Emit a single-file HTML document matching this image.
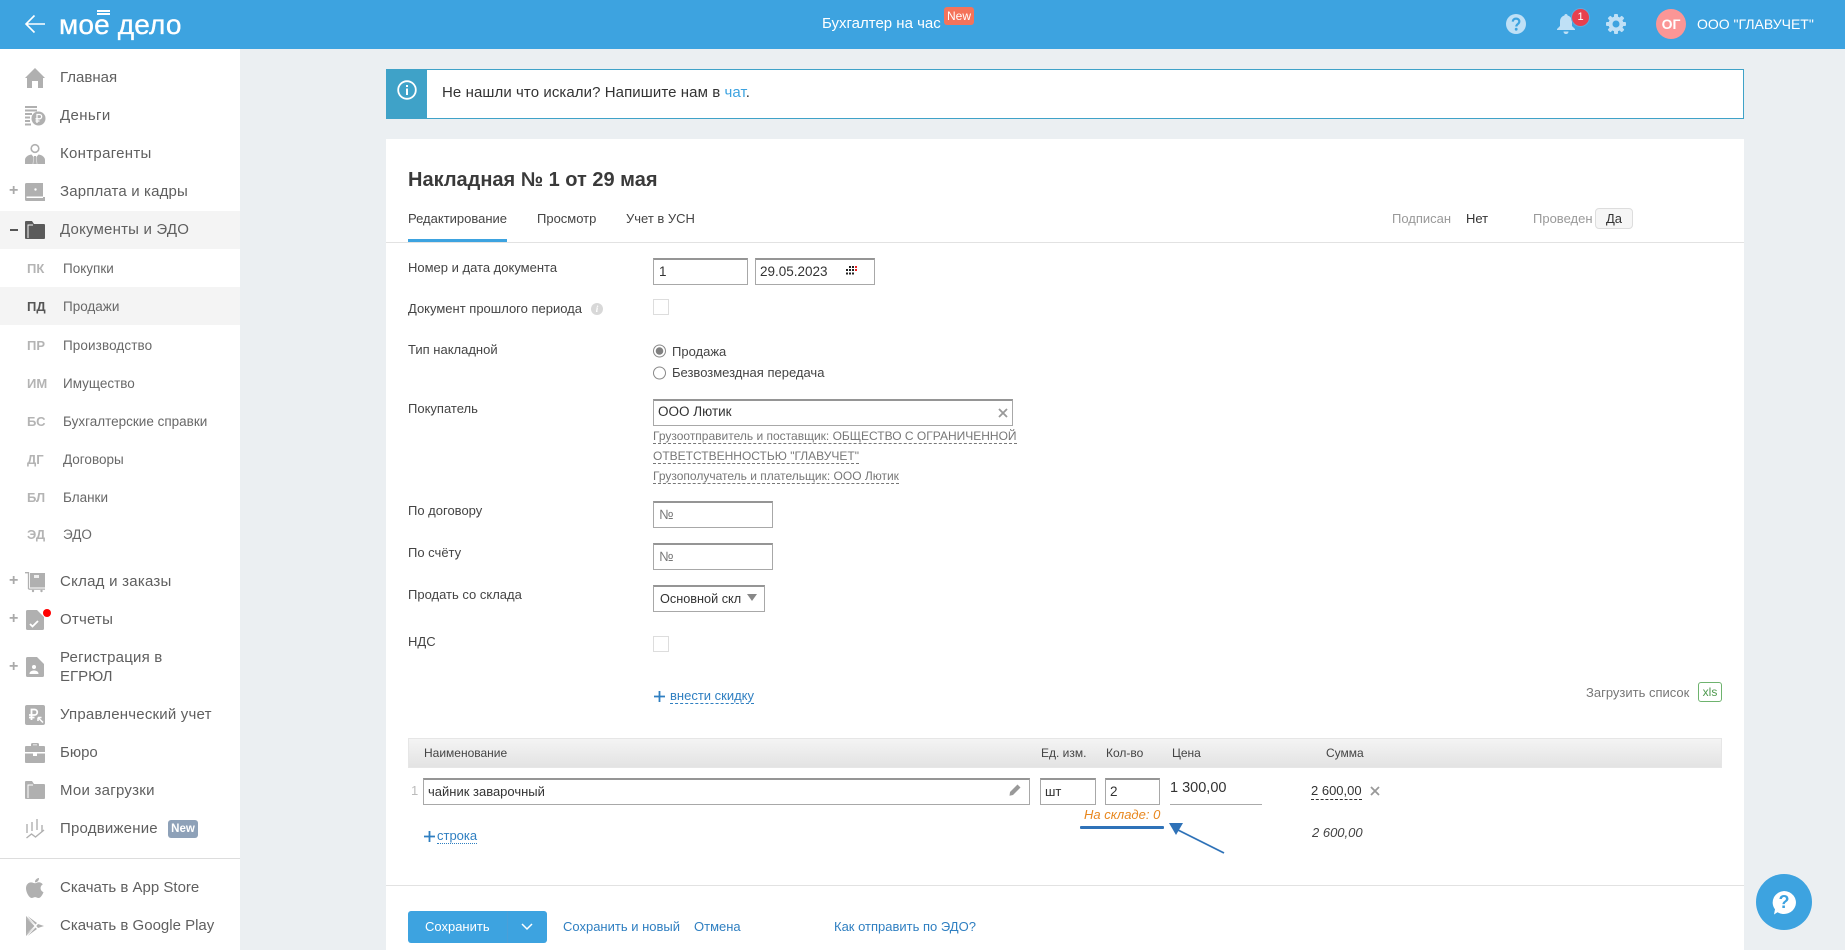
<!DOCTYPE html>
<html lang="ru"><head><meta charset="utf-8"><title>Накладная</title>
<style>
html,body{margin:0;padding:0;width:1845px;height:950px;overflow:hidden;background:#ebeff2;font-family:"Liberation Sans",sans-serif;color:#333}
.a{position:absolute}
.t{position:absolute;white-space:nowrap;line-height:20px}
.m{font-size:15px;color:#5f5f5f;left:60px}
.s{font-size:13.5px;color:#686868;left:63px}
.b{font-size:13px;font-weight:bold;color:#b4b4b4;left:27px}
.p{font-size:16px;font-weight:bold;color:#aaa;left:9px}
.l{font-size:13px;color:#444;left:408px}
.i{position:absolute;box-sizing:border-box;background:#fff;border:1px solid #a8a8a8;border-top:2px solid #959595;height:27px;font-size:13.5px;line-height:24px;padding-left:5px;color:#333;white-space:nowrap}
.c{position:absolute;box-sizing:border-box;width:16px;height:16px;background:#fff;border:1px solid #ddd}
.d{position:absolute;white-space:nowrap;font-size:12px;line-height:20px;color:#777;left:653px}
.u{position:absolute;height:0;border-bottom:1px dashed #777}
.h{position:absolute;white-space:nowrap;font-size:12px;line-height:20px;color:#444;top:743px}
.lk{position:absolute;white-space:nowrap;font-size:13px;line-height:20px;color:#2f7fc1;top:917px}
svg{position:absolute;display:block;overflow:visible}
</style></head><body>

<!-- header -->
<div class="a" style="left:0;top:0;width:1845px;height:49px;background:#3da3e0"></div>
<svg style="left:24px;top:13px" width="22" height="22" viewBox="0 0 22 22" fill="none" stroke="#fff" stroke-width="1.6"><path d="M21 11H2M10.5 2.5L2 11l8.500 8.500"/></svg>
<div class="t" style="left:59px;top:10px;font-size:28px;line-height:30px;color:#fff;letter-spacing:.15px;-webkit-text-stroke:.35px #fff">мое дело</div>
<div class="a" style="left:97px;top:10px;width:13px;height:1.5px;background:#fff"></div>
<div class="a" style="left:97px;top:13px;width:13px;height:1.5px;background:#fff"></div>
<div class="t" style="left:822px;top:14px;font-size:15px;color:#fff">Бухгалтер на час</div>
<div class="t" style="left:944px;top:7px;width:30px;height:18px;line-height:18px;background:#f4735a;border-radius:3px;color:#fff;font-size:12px;text-align:center">New</div>

<svg style="left:1506px;top:14px" width="20" height="20" viewBox="0 0 20 20"><circle cx="10" cy="10" r="10" fill="#bfe0f6"/><path d="M6.800 7.600C6.800 5.800 8.200 4.600 10 4.600c1.900 0 3.300 1.100 3.300 2.900 0 2.600-3 2.500-3 5" fill="none" stroke="#3da3e0" stroke-width="2.200"/><circle cx="10.200" cy="15.200" r="1.400" fill="#3da3e0"/></svg>
<svg style="left:1557px;top:14px" width="18" height="20" viewBox="0 0 18 20" fill="#bfe0f6"><path d="M9 0c1 0 1.600.7 1.600 1.500C13.500 2.300 15 4.700 15 7.500v4.500l3 3v1H0v-1l3-3V7.500c0-2.800 1.500-5.200 4.400-6C7.400.7 8 0 9 0z"/><path d="M6.500 17.500h5c0 1.500-1.100 2.500-2.500 2.500s-2.500-1-2.500-2.500z"/></svg>
<div class="a" style="left:1571px;top:8px;width:17px;height:17px;border-radius:50%;background:#e8404e;border:1.500px solid #5cace0;color:#fff;font-size:11px;line-height:17px;text-align:center">1</div>
<svg style="left:1606px;top:14px" width="20" height="20" viewBox="0 0 20 20"><g fill="#bfe0f6"><circle cx="10" cy="10" r="7.500"/><rect x="8" y="0" width="4" height="20" rx="1"/><rect x="8" y="0" width="4" height="20" rx="1" transform="rotate(45 10 10)"/><rect x="8" y="0" width="4" height="20" rx="1" transform="rotate(90 10 10)"/><rect x="8" y="0" width="4" height="20" rx="1" transform="rotate(135 10 10)"/></g><circle cx="10" cy="10" r="3.500" fill="#3da3e0"/></svg>
<div class="a" style="left:1656px;top:9px;width:30px;height:30px;border-radius:50%;background:#fb9696;color:#fff;font-size:14px;font-weight:bold;line-height:30px;text-align:center">ОГ</div>
<div class="t" style="left:1697px;top:14px;font-size:14px;color:#fff">ООО "ГЛАВУЧЕТ"</div>

<!-- sidebar -->
<div class="a" style="left:0;top:49px;width:240px;height:901px;background:#fff"></div>
<div class="a" style="left:0;top:211px;width:240px;height:38px;background:#f4f4f4"></div>
<div class="a" style="left:0;top:287px;width:240px;height:38px;background:#f4f4f4"></div>
<div class="a" style="left:0;top:858px;width:240px;height:1px;background:#ddd"></div>

<div class="t m" style="top:68px">Главная</div>
<div class="t m" style="top:106px;letter-spacing:.35px">Деньги</div>
<div class="t m" style="top:144px;letter-spacing:.3px">Контрагенты</div>
<div class="t m" style="top:182px;letter-spacing:.15px">Зарплата и кадры</div>
<div class="t m" style="top:220px;letter-spacing:.2px">Документы и ЭДО</div>
<div class="t s" style="top:259px">Покупки</div><div class="t b" style="top:259px">ПК</div>
<div class="t s" style="top:297px">Продажи</div><div class="t b" style="top:297px;color:#555">ПД</div>
<div class="t s" style="top:336px;letter-spacing:.1px">Производство</div><div class="t b" style="top:336px">ПР</div>
<div class="t s" style="top:374px">Имущество</div><div class="t b" style="top:374px">ИМ</div>
<div class="t s" style="top:412px">Бухгалтерские справки</div><div class="t b" style="top:412px">БС</div>
<div class="t s" style="top:450px">Договоры</div><div class="t b" style="top:450px">ДГ</div>
<div class="t s" style="top:488px">Бланки</div><div class="t b" style="top:488px">БЛ</div>
<div class="t s" style="top:525px">ЭДО</div><div class="t b" style="top:525px">ЭД</div>
<div class="t m" style="top:572px;letter-spacing:.25px">Склад и заказы</div>
<div class="t m" style="top:610px;letter-spacing:.2px">Отчеты</div>
<div class="t m" style="top:648px;letter-spacing:.2px">Регистрация в</div>
<div class="t m" style="top:667px">ЕГРЮЛ</div>
<div class="t m" style="top:705px;letter-spacing:.2px">Управленческий учет</div>
<div class="t m" style="top:743px">Бюро</div>
<div class="t m" style="top:781px;letter-spacing:.25px">Мои загрузки</div>
<div class="t m" style="top:819px;letter-spacing:.2px">Продвижение</div>
<div class="t" style="left:168px;top:820px;width:30px;height:18px;line-height:18px;background:#8ea1b8;border-radius:3px;color:#fff;font-size:11.500px;font-weight:bold;text-align:center">New</div>
<div class="t m" style="top:878px">Скачать в App Store</div>
<div class="t m" style="top:916px">Скачать в Google Play</div>

<div class="t p" style="top:181px">+</div>
<div class="a" style="left:10px;top:229px;width:8px;height:2px;background:#555"></div>
<div class="t p" style="top:571px">+</div>
<div class="t p" style="top:609px">+</div>
<div class="t p" style="top:657px">+</div>

<!-- sidebar icons -->
<svg style="left:25px;top:68px" width="20" height="20" viewBox="0 0 20 20" fill="#b0b0b0"><path d="M10 0l10 10h-2v10h-5v-7H7v7H2V10H0z"/></svg>
<svg style="left:25px;top:106px" width="20" height="20" viewBox="0 0 20 20" fill="#b0b0b0"><rect x="0" y="0" width="12" height="2"/><rect x="0" y="3.500" width="12" height="2"/><rect x="0" y="7" width="7" height="2"/><rect x="0" y="10.500" width="5" height="2"/><rect x="0" y="14" width="5" height="2"/><rect x="0" y="17.500" width="6" height="2"/><circle cx="13.500" cy="12.500" r="7"/><path d="M12 17V8.500h2.500a2.100 2.100 0 010 4.300H10.500M10.500 15h4" fill="none" stroke="#fff" stroke-width="1.300"/></svg>
<svg style="left:25px;top:144px" width="20" height="20" viewBox="0 0 20 20"><circle cx="10" cy="4.500" r="3.800" fill="none" stroke="#b0b0b0" stroke-width="1.600"/><path d="M0 20v-4c0-3 3-5 6.500-5.500L8.500 13l-.8 7zM20 20v-4c0-3-3-5-6.500-5.500L11.500 13l.8 7zM9 12h2l.8 8H8.200z" fill="#b0b0b0"/></svg>
<svg style="left:25px;top:183px" width="20" height="18" viewBox="0 0 20 18" fill="#b0b0b0"><path d="M0 1.500A1.500 1.500 0 011.500 0H18v13.500H1.500V15H18v-1h2v4H1.500A1.500 1.500 0 010 16.500z"/><circle cx="10.500" cy="6.500" r="1.200" fill="#fff"/></svg>
<svg style="left:25px;top:221px" width="20" height="18" viewBox="0 0 20 18"><path d="M0 1a1 1 0 011-1h6l2 3h10a1 1 0 011 1v13a1 1 0 01-1 1H1a1 1 0 01-1-1z" fill="#5a5a5a"/><path d="M3 17V4h5" fill="none" stroke="#f4f4f4" stroke-width="1"/></svg>
<svg style="left:25px;top:572px" width="20" height="20" viewBox="0 0 20 20" fill="#b0b0b0"><path d="M0 .7h3.500V17" fill="none" stroke="#b0b0b0" stroke-width="1.300"/><path d="M5 1h15v14.500H5z"/><rect x="9" y="3" width="5" height="3" fill="#fff" opacity=".8"/><rect x="3.500" y="16.500" width="16.500" height="1.300"/><circle cx="8" cy="19" r="1.200"/><circle cx="16.500" cy="19" r="1.200"/></svg>
<svg style="left:26px;top:610px" width="18" height="20" viewBox="0 0 18 20"><path d="M1.500 0H11l7 7v11.500a1.500 1.500 0 01-1.500 1.500h-15A1.500 1.500 0 010 18.500v-17A1.500 1.500 0 011.500 0z" fill="#b0b0b0"/><path d="M4 14l2.500 2.500L12 11" fill="none" stroke="#fff" stroke-width="1.800"/></svg>
<div class="a" style="left:43px;top:609px;width:8px;height:8px;background:#f00;border-radius:50%"></div>
<svg style="left:26px;top:657px" width="18" height="20" viewBox="0 0 18 20"><path d="M1.500 0H11l7 7v11.500a1.500 1.500 0 01-1.500 1.500h-15A1.500 1.500 0 010 18.500v-17A1.500 1.500 0 011.500 0z" fill="#b0b0b0"/><circle cx="8" cy="10" r="2" fill="#fff"/><path d="M3.500 17c0-2.500 2-3.500 4.500-3.500s4.500 1 4.500 3.500z" fill="#fff"/></svg>
<svg style="left:25px;top:705px" width="20" height="20" viewBox="0 0 20 20"><rect width="20" height="20" rx="2" fill="#b0b0b0"/><path d="M6.500 15V4.500h3a2.700 2.700 0 010 5.500H4M4 12.500h5.500" fill="none" stroke="#fff" stroke-width="1.800"/><path d="M13 12.500l5 5M13 12.500h3.500M13 12.500V16" fill="none" stroke="#fff" stroke-width="1.500"/></svg>
<svg style="left:25px;top:743px" width="20" height="20" viewBox="0 0 20 20" fill="#b0b0b0"><path d="M6 3V1.500A1.500 1.500 0 017.500 0h5A1.500 1.500 0 0114 1.500V3h5a1 1 0 011 1v5H0V4a1 1 0 011-1zm2-.7h4V1.500H8z"/><path d="M0 10.500h8V13h4v-2.500h8V19a1 1 0 01-1 1H1a1 1 0 01-1-1z"/></svg>
<svg style="left:25px;top:781px" width="20" height="18" viewBox="0 0 20 18"><path d="M0 1a1 1 0 011-1h6l2 3h10a1 1 0 011 1v13a1 1 0 01-1 1H1a1 1 0 01-1-1z" fill="#b0b0b0"/><path d="M3 17V4h5" fill="none" stroke="#fff" stroke-width="1"/></svg>
<svg style="left:26px;top:819px" width="19" height="20" viewBox="0 0 19 20" fill="none" stroke="#b0b0b0" stroke-width="1.400"><path d="M1 5v9M6 3v9M11 0v11M16 6v7"/><path d="M0.500 19l5-4 4 3 8.500-7"/></svg>
<svg style="left:26px;top:878px" width="18" height="20" viewBox="0 0 18 20" fill="#b0b0b0"><path d="M13 0c.2 2.300-1.800 4.500-4 4.300C8.800 2.100 10.800.1 13 0zM9.100 5.300c1.100 0 2.100-1 3.800-1 1.500 0 3 .8 3.900 2.100-3.300 1.900-2.800 6.500.7 7.800-.9 2.300-2.900 5.800-4.900 5.800-1.400 0-2-.9-3.500-.9s-2.200.9-3.500.9C3.200 20 0 14.500 0 10.300 0 6.600 2.400 4.400 5 4.400c1.700 0 3 .9 4.100.9z"/></svg>
<svg style="left:26px;top:916px" width="18" height="20" viewBox="0 0 18 20" fill="#b0b0b0"><path d="M0 0l9 9.300L0 1.500zM1.500 0l9.500 7-1.500 1.500zM0 20l9-9.300L0 18.500zM1.500 20l9.500-7-1.500-1.500zM12 8l6 2-6 2-1.700-2z"/><path d="M0 1.500L8.500 10 0 18.500z"/></svg>

<!-- notice -->
<div class="a" style="left:386px;top:69px;width:1358px;height:50px;box-sizing:border-box;background:#fff;border:1px solid #3fa2c8"></div>
<div class="a" style="left:386px;top:69px;width:41px;height:50px;background:#3fa2c8"></div>
<svg style="left:397px;top:80px" width="20" height="20" viewBox="0 0 20 20"><circle cx="10" cy="10" r="8.800" fill="none" stroke="#fff" stroke-width="1.800"/><rect x="9" y="8.500" width="2" height="6.500" fill="#fff"/><rect x="9" y="5" width="2" height="2" fill="#fff"/></svg>
<div class="t" style="left:442px;top:83px;font-size:15px;letter-spacing:.08px;color:#333">Не нашли что искали? Напишите нам в <span style="color:#3da3e0">чат</span>.</div>

<!-- card -->
<div class="a" style="left:386px;top:139px;width:1358px;height:811px;background:#fff"></div>
<div class="t" style="left:408px;top:169px;font-size:20px;line-height:22px;font-weight:bold;color:#3a3a3a">Накладная № 1 от 29 мая</div>
<div class="t" style="left:408px;top:209px;font-size:13px;color:#444">Редактирование</div>
<div class="t" style="left:537px;top:209px;font-size:13px;color:#444">Просмотр</div>
<div class="t" style="left:626px;top:209px;font-size:13px;color:#444">Учет в УСН</div>
<div class="a" style="left:386px;top:242px;width:1358px;height:1px;background:#e2e2e2"></div>
<div class="a" style="left:408px;top:239px;width:99px;height:3px;background:#3da3e0"></div>
<div class="t" style="left:1392px;top:209px;font-size:13px;color:#999">Подписан</div>
<div class="t" style="left:1466px;top:209px;font-size:13px;color:#333">Нет</div>
<div class="t" style="left:1533px;top:209px;font-size:13px;color:#999">Проведен</div>
<div class="t" style="left:1595px;top:208px;width:38px;height:21px;box-sizing:border-box;background:#f6f6f6;border:1px solid #ddd;border-radius:4px;font-size:13px;line-height:19px;text-align:center;color:#333">Да</div>

<!-- form -->
<div class="t l" style="top:258px">Номер и дата документа</div>
<div class="t l" style="top:299px">Документ прошлого периода</div>
<div class="a" style="left:591px;top:303px;width:12px;height:12px;border-radius:50%;background:#d8d8d8;color:#fff;font:italic bold 9px/12px 'Liberation Serif',serif;text-align:center">i</div>
<div class="t l" style="top:340px">Тип накладной</div>
<div class="t l" style="top:399px">Покупатель</div>
<div class="t l" style="top:501px">По договору</div>
<div class="t l" style="top:543px">По счёту</div>
<div class="t l" style="top:585px">Продать со склада</div>
<div class="t l" style="top:632px">НДС</div>

<div class="i" style="left:653px;top:258px;width:95px">1</div>
<div class="i" style="left:755px;top:258px;width:120px;padding-left:4px">29.05.2023</div>
<svg style="left:846px;top:266px" width="12" height="9" viewBox="0 0 12 9" fill="#222"><g><rect x="0" y="3" width="2" height="2"/><rect x="0" y="6.500" width="2" height="2"/><rect x="3" y="0" width="2" height="2"/><rect x="3" y="3" width="2" height="2"/><rect x="3" y="6.500" width="2" height="2"/><rect x="6" y="0" width="2" height="2"/><rect x="6" y="3" width="2" height="2"/><rect x="6" y="6.500" width="2" height="2"/></g><rect x="9" y="0" width="2" height="2" fill="#e22"/><rect x="9" y="3" width="2" height="2" fill="#e22"/></svg>
<div class="c" style="left:653px;top:299px"></div>

<svg style="left:653px;top:344px" width="14" height="36" viewBox="0 0 14 36"><circle cx="6.500" cy="7" r="6" fill="#fff" stroke="#888"/><circle cx="6.500" cy="7" r="3.800" fill="#808080"/><circle cx="6.500" cy="29" r="6" fill="#fff" stroke="#888"/></svg>
<div class="t" style="left:672px;top:342px;font-size:13px;color:#444">Продажа</div>
<div class="t" style="left:672px;top:363px;font-size:13px;color:#444">Безвозмездная передача</div>

<div class="i" style="left:653px;top:399px;width:360px;padding-left:4px;line-height:22px">ООО Лютик</div>
<svg style="left:998px;top:408px" width="10" height="10" viewBox="0 0 10 10" stroke="#999" stroke-width="1.800"><path d="M1 1l8 8M9 1l-8 8"/></svg>
<div class="d" style="top:426px">Грузоотправитель и поставщик: ОБЩЕСТВО С ОГРАНИЧЕННОЙ</div>
<div class="u" style="left:653px;top:443px;width:364px"></div>
<div class="d" style="top:446px">ОТВЕТСТВЕННОСТЬЮ "ГЛАВУЧЕТ"</div>
<div class="u" style="left:653px;top:463px;width:206px"></div>
<div class="d" style="top:466px">Грузополучатель и плательщик: ООО Лютик</div>
<div class="u" style="left:653px;top:483px;width:246px"></div>

<div class="i" style="left:653px;top:501px;width:120px;color:#777">№</div>
<div class="i" style="left:653px;top:543px;width:120px;color:#777">№</div>
<div class="i" style="left:653px;top:585px;width:112px;padding-left:6px;font-size:12.700px">Основной скл</div>
<svg style="left:747px;top:594px" width="10" height="7" viewBox="0 0 10 7"><path d="M0 0h10L5 7z" fill="#888"/></svg>
<div class="c" style="left:653px;top:636px"></div>

<svg style="left:654px;top:691px" width="11" height="11" viewBox="0 0 11 11" stroke="#2f7fc1" stroke-width="1.800"><path d="M5.500 0v11M0 5.500h11"/></svg>
<div class="t" style="left:670px;top:686px;font-size:13px;color:#2f7fc1">внести скидку</div>
<div class="u" style="left:670px;top:703px;width:84px;border-color:#2f7fc1"></div>

<div class="t" style="left:1586px;top:683px;font-size:13px;color:#777">Загрузить список</div>
<div class="t" style="left:1698px;top:682px;width:24px;height:20px;box-sizing:border-box;border:1px solid #6eb36e;border-radius:3px;font-size:12px;line-height:18px;text-align:center;color:#4f9a4f">xls</div>

<!-- table -->
<div class="a" style="left:408px;top:738px;width:1314px;height:30px;box-sizing:border-box;background:linear-gradient(#f4f4f4,#e3e3e3);border:1px solid #e6e6e6"></div>
<div class="h" style="left:424px">Наименование</div>
<div class="h" style="left:1041px">Ед. изм.</div>
<div class="h" style="left:1106px">Кол-во</div>
<div class="h" style="left:1172px">Цена</div>
<div class="h" style="left:1326px">Сумма</div>

<div class="t" style="left:411px;top:781px;font-size:13px;color:#bbb">1</div>
<div class="i" style="left:423px;top:778px;width:607px;height:27px;font-size:13px;padding-left:4px">чайник заварочный</div>
<svg style="left:1009px;top:784px" width="12" height="12" viewBox="0 0 12 12" fill="#999"><path d="M8.500 0.500L11.500 3.500 4 11 0.500 11.800 1 8z"/></svg>
<div class="i" style="left:1040px;top:778px;width:56px;font-size:13px;padding-left:4px">шт</div>
<div class="i" style="left:1105px;top:778px;width:55px;padding-left:4px">2</div>
<div class="t" style="left:1170px;top:778px;font-size:14.500px;color:#333">1 300,00</div>
<div class="a" style="left:1170px;top:804px;width:92px;height:1px;background:#aaa"></div>
<div class="t" style="left:1311px;top:781px;font-size:13px;color:#333">2 600,00</div>
<div class="u" style="left:1311px;top:799px;width:51px;border-color:#333"></div>
<svg style="left:1370px;top:786px" width="10" height="10" viewBox="0 0 10 10" stroke="#999" stroke-width="1.800"><path d="M1 1l8 8M9 1l-8 8"/></svg>

<div class="t" style="left:1084px;top:805px;font-size:13px;font-style:italic;color:#e8871e">На складе: 0</div>
<div class="a" style="left:1080px;top:826px;width:84px;height:3px;background:#2f72b8;border-radius:1px"></div>
<svg style="left:0;top:0" width="1845" height="950" viewBox="0 0 1845 950"><path d="M1224 853L1176 829" stroke="#2f72b8" stroke-width="1.800" fill="none"/><path d="M1169 823L1183 823L1176 835z" fill="#2f72b8"/></svg>

<svg style="left:424px;top:831px" width="11" height="11" viewBox="0 0 11 11" stroke="#2f7fc1" stroke-width="1.800"><path d="M5.500 0v11M0 5.500h11"/></svg>
<div class="t" style="left:437px;top:826px;font-size:13px;color:#2f7fc1">строка</div>
<div class="a" style="left:437px;top:843px;width:40px;height:0;border-bottom:1px dotted #2f7fc1"></div>
<div class="t" style="left:1312px;top:823px;font-size:13px;font-style:italic;color:#444">2 600,00</div>

<div class="a" style="left:386px;top:885px;width:1358px;height:1px;background:#e2e2e2"></div>

<!-- footer -->
<div class="a" style="left:408px;top:911px;width:139px;height:32px;background:#3da3e0;border-radius:3px"></div>
<div class="a" style="left:507px;top:911px;width:1px;height:32px;background:#4a9fd8"></div>
<div class="t" style="left:425px;top:917px;font-size:13px;color:#fff">Сохранить</div>
<svg style="left:521px;top:923px" width="12" height="8" viewBox="0 0 12 8" fill="none" stroke="#fff" stroke-width="1.500"><path d="M1 1l5 5 5-5"/></svg>
<div class="lk" style="left:563px">Сохранить и новый</div>
<div class="lk" style="left:694px">Отмена</div>
<div class="lk" style="left:834px">Как отправить по ЭДО?</div>

<!-- help fab -->
<div class="a" style="left:1756px;top:874px;width:56px;height:56px;border-radius:50%;background:#3da3e0"></div>
<svg style="left:1771px;top:890px" width="26" height="26" viewBox="0 0 26 26"><path d="M13 1a12 11.500 0 11-6.500 21.200L3 24.500l1-5.200A12 11.500 0 0113 1z" fill="#fff"/></svg>
<div class="a" style="left:1772px;top:890px;width:24px;height:24px;color:#3da3e0;font-size:18px;font-weight:bold;line-height:24px;text-align:center">?</div>
</body></html>
